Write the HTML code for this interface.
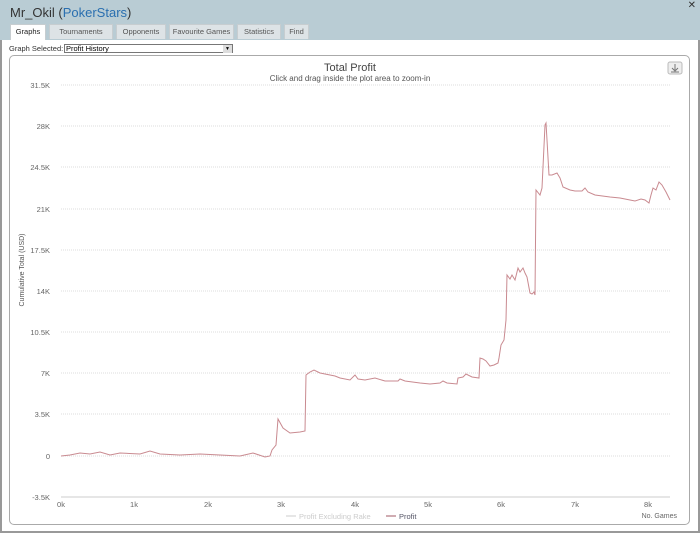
<!DOCTYPE html>
<html><head><meta charset="utf-8"><style>
*{margin:0;padding:0;box-sizing:border-box}
body{width:700px;height:533px;overflow:hidden;background:#fff;font-family:"Liberation Sans",sans-serif;position:relative}
.hdr{position:absolute;left:0;top:0;width:700px;height:40px;background:#b9ccd4}
.title{position:absolute;left:10px;top:5px;font-size:13px;color:#333}
.title span{color:#2a6fb0}
.x{position:absolute;right:4px;top:0;font-size:10px;color:#333}
.tabs{position:absolute;left:10px;top:24px;height:15px}
.tab{position:absolute;top:0;height:15px;background:#dde3e6;border:1px solid #c7cdd0;border-bottom:none;font-size:7.5px;color:#555;text-align:center;line-height:14px}
.tab.a{background:#fff;color:#222;height:16px}
.frame{position:absolute;left:0;top:40px;width:700px;height:493px;border-left:2px solid #999;border-right:2px solid #999;border-bottom:2px solid #999}
.sel{position:absolute;left:9px;top:44px;font-size:7.5px;color:#333}
.dd{position:absolute;left:64px;top:44px;width:169px;height:9px;border:1px solid #777;font-size:7.5px;line-height:8px;padding-left:1px;background:#fff}
.dd b{position:absolute;right:0;top:0;width:9px;height:8px;background:#ddd;font-size:5px;text-align:center}
.box{position:absolute;left:9px;top:55px;width:681px;height:470px;border:1px solid #aaa;border-radius:5px}
</style></head><body>
<div class="hdr"></div>
<div class="title">Mr_Okil (<span>PokerStars</span>)</div>
<div class="x">✕</div>
<div class="frame"></div>
<div class="tabs">
<div class="tab a" style="left:0;width:36px">Graphs</div>
<div class="tab" style="left:39px;width:64px">Tournaments</div>
<div class="tab" style="left:106px;width:50px">Opponents</div>
<div class="tab" style="left:159px;width:65px">Favourite Games</div>
<div class="tab" style="left:227px;width:44px">Statistics</div>
<div class="tab" style="left:274px;width:25px">Find</div>
</div>
<div class="sel">Graph Selected:</div>
<div class="dd">Profit History<b>▼</b></div>
<div class="box"></div>
<svg style="position:absolute;left:0;top:0" width="700" height="533" font-family="Liberation Sans, sans-serif">
<text x="350" y="71" text-anchor="middle" font-size="11" fill="#444">Total Profit</text>
<text x="350" y="81" text-anchor="middle" font-size="8" fill="#555">Click and drag inside the plot area to zoom-in</text>
<rect x="668" y="62" width="14" height="12" rx="2" fill="#eee" stroke="#bbb"/>
<path d="M675 64v6M672 68l3 3 3-3M671 72h8" stroke="#777" fill="none"/>
<g stroke="#ddd" stroke-dasharray="1,1">
<line x1="61" y1="85" x2="670" y2="85"/><line x1="61" y1="126" x2="670" y2="126"/><line x1="61" y1="167" x2="670" y2="167"/><line x1="61" y1="209" x2="670" y2="209"/><line x1="61" y1="250" x2="670" y2="250"/><line x1="61" y1="291" x2="670" y2="291"/><line x1="61" y1="332" x2="670" y2="332"/><line x1="61" y1="373" x2="670" y2="373"/><line x1="61" y1="414" x2="670" y2="414"/><line x1="61" y1="456" x2="670" y2="456"/>
</g>
<line x1="61" y1="497" x2="670" y2="497" stroke="#ccc"/>
<g font-size="7.5" fill="#666" text-anchor="end">
<text x="50" y="88">31.5K</text><text x="50" y="129">28K</text><text x="50" y="170">24.5K</text><text x="50" y="212">21K</text><text x="50" y="253">17.5K</text><text x="50" y="294">14K</text><text x="50" y="335">10.5K</text><text x="50" y="376">7K</text><text x="50" y="417">3.5K</text><text x="50" y="459">0</text><text x="50" y="500">-3.5K</text>
</g>
<g font-size="7.5" fill="#666" text-anchor="middle">
<text x="61" y="507">0k</text><text x="134" y="507">1k</text><text x="208" y="507">2k</text><text x="281" y="507">3k</text><text x="355" y="507">4k</text><text x="428" y="507">5k</text><text x="501" y="507">6k</text><text x="575" y="507">7k</text><text x="648" y="507">8k</text>
</g>
<text x="24" y="270" font-size="7" fill="#555" text-anchor="middle" transform="rotate(-90 24 270)">Cumulative Total (USD)</text>
<text x="677" y="518" font-size="7" fill="#666" text-anchor="end">No. Games</text>
<line x1="286" y1="516" x2="296" y2="516" stroke="#ccc"/>
<text x="299" y="519" font-size="7.5" fill="#ccc">Profit Excluding Rake</text>
<line x1="386" y1="516" x2="396" y2="516" stroke="#a05a66"/>
<text x="399" y="519" font-size="7.5" fill="#556">Profit</text>
<polyline fill="none" stroke="#c98a90" stroke-width="1" points="61,456 70,455 80,453 90,454 100,452 110,455 120,453 140,454 150,451 160,454 180,455 200,454 220,455 240,456 253,453 265,457 270,456 272,450 276,445 278,419 283,428 290,433 300,432 305,431 306,375 310,372 314,370 320,373 335,376 340,378 350,380 355,375 358,379 365,380 375,378 385,381 398,381 400,379 405,381 420,383 430,384 440,383 443,381 447,383 457,384 458,378 463,377 466,374 472,377 479,378 480,358 483,359 486,361 490,366 494,365 498,363 499,358 501,345 504,340 506,320 507,275 510,279 512,275 515,280 518,268 520,272 523,268 525,273 527,277 530,293 532,294 534,292 535,295 536,190 540,195 542,188 545,125 546,123 547,140 549,175 552,175 557,173 560,178 563,187 570,190 575,191 582,191 585,188 588,192 595,195 610,197 620,198 630,200 635,201 641,199 645,200 649,203 651,195 653,188 656,190 659,182 662,185 666,192 670,200"/>
</svg>
</body></html>
